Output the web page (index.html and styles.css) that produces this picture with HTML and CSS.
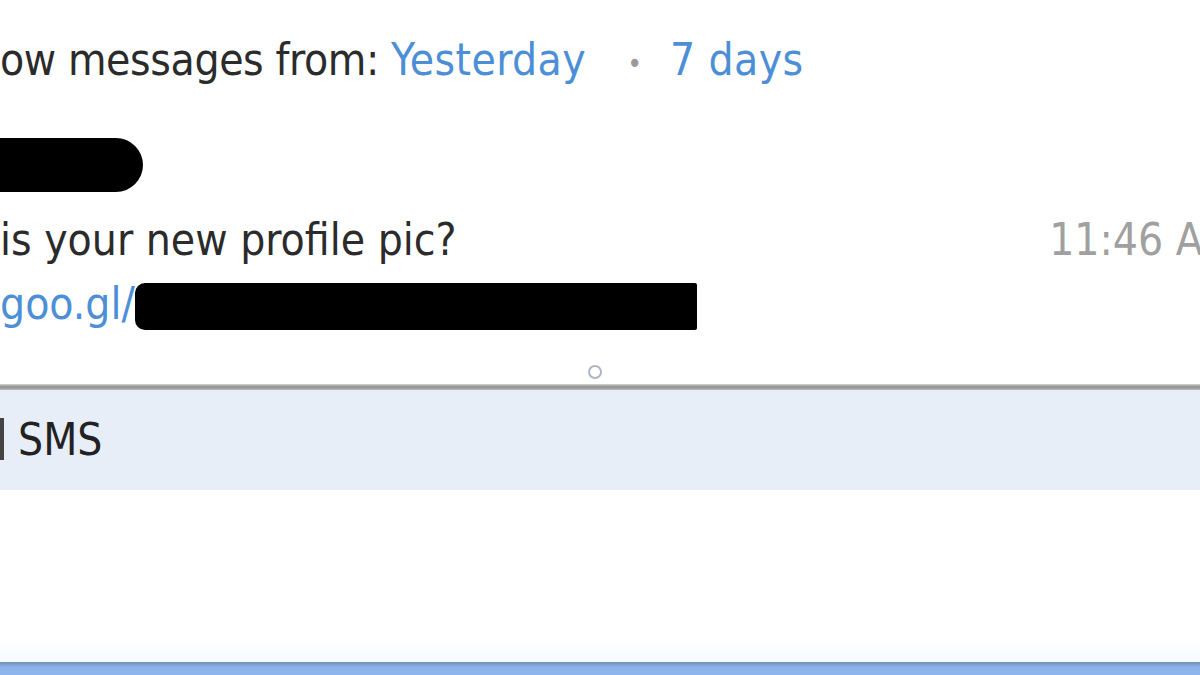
FILE: index.html
```html
<!DOCTYPE html>
<html lang="en">

<head>
    <meta charset="UTF-8">
    <title>Messages</title>
    <link rel="stylesheet" href="styles.css">
</head>

<body>
    <div class="filter">
        ow messages from: <a class="link">Yesterday</a>
        <span class="sep">&bull;</span>
        <a class="link">7 days</a>
    </div>

    <div class="thread">
        <div class="blot name"></div>
        <div class="msg">
            <span>is your new profile pic?</span>
            <span class="time">11:46 AM</span>
        </div>
        <div class="msg">
            <a class="link">goo.gl/</a><span class="blot url"></span>
        </div>
    </div>

    <div class="handle"><span class="knob"></span></div>
    <div class="divider"></div>

    <div class="sms"><span class="check"></span>SMS</div>

    <div class="compose"></div>
    <div class="footer"></div>
</body>

</html>
```

FILE: styles.css
```css
body {
    margin: 0;
    width: 1200px;
    height: 675px;
    overflow: hidden;
    background: #fff;
    font-family: "DejaVu Sans", sans-serif;
    font-stretch: condensed;
    font-size: 44px;
    color: #2b2b2b;
}

.link {
    color: #4c8fd6;
}

.filter {
    height: 60px;
    padding-top: 30px;
    line-height: 60px;
    white-space: nowrap;
    letter-spacing: -0.4px;
}

.filter .link {
    letter-spacing: 0.4px;
}

.sep {
    color: #9a9a9a;
    font-size: 28px;
    line-height: 1;
    margin: 0 16px 0 29px;
    vertical-align: 2px;
}

.thread {
    display: flex;
    flex-direction: column;
}

.blot {
    background: #000;
}

.blot.name {
    margin-top: 48px;
    width: 143px;
    height: 54px;
    border-radius: 0 27px 27px 0;
}

.msg {
    display: flex;
    height: 64px;
    line-height: 64px;
    white-space: nowrap;
}

.msg:nth-child(2) {
    margin-top: 16px;
}

.time {
    margin-left: auto;
    margin-right: -37px;
    color: #a0a0a0;
}

.blot.url {
    width: 562px;
    height: 47px;
    margin-top: 11px;
    border-radius: 10px 2px 2px 10px;
}

.handle {
    height: 48px;
    display: flex;
    justify-content: center;
    align-items: flex-end;
}

.knob {
    width: 10px;
    height: 10px;
    margin-left: -10px;
    margin-bottom: 5px;
    border: 2px solid #aeb6c2;
    border-radius: 50%;
}

.divider {
    height: 6px;
    background: linear-gradient(#d4d4d4, #8f8f8f 50%, #bcbcbc);
}

.sms {
    height: 100px;
    line-height: 100px;
    background: #e8eef8;
    color: #222;
}

.check {
    display: inline-block;
    width: 4px;
    height: 42px;
    margin-right: 14px;
    vertical-align: -5px;
    background: #444;
}

.compose {
    height: 172px;
    background: linear-gradient(#fff 85%, #f5fbff);
}

.footer {
    height: 13px;
    background: linear-gradient(#6f8fb8, #8db3ea 40%, #8fb6ee);
}
```
